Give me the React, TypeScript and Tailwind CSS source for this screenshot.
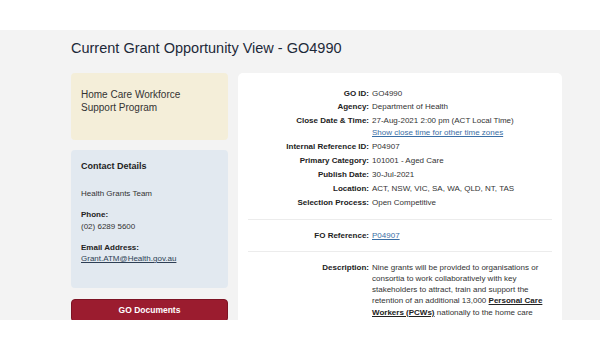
import React from "react";

type RowProps = { label: string; children: React.ReactNode };

function Row({ label, children }: RowProps) {
  return (
    <div className="flex gap-[3px]">
      <div className="w-[121px] shrink-0 text-right font-bold text-[#222]">{label}</div>
      <div className="flex-1 text-[#333]">{children}</div>
    </div>
  );
}

export default function App() {
  return (
    <div className="w-[600px] h-[350px] overflow-hidden bg-white font-['Liberation_Sans',Arial,sans-serif]">
      {/* top bar */}
      <div className="h-[30px] bg-white" />

      {/* page body */}
      <div className="h-[290px] overflow-hidden bg-[#f3f3f3] pl-[71px]">
        <h1 className="pt-[9px] text-[14.5px] leading-[18px] text-[#1d2939]">
          Current Grant Opportunity View - GO4990
        </h1>

        <div className="mt-[16px] flex gap-[10px]">
          {/* left column */}
          <div className="flex w-[157px] shrink-0 flex-col">
            <div className="h-[67px] rounded-[4px] bg-[#f4eed9] px-[10px] pt-[15px] text-[10px] leading-[13.3px] text-[#333]">
              Home Care Workforce
              <br />
              Support Program
            </div>

            <div className="mt-[10px] h-[138px] rounded-[4px] bg-[#e2e9f0] px-[10px] pt-[10px] text-[8px] leading-[11.5px] text-[#333]">
              <div className="text-[9px] leading-[12px] font-bold text-[#222]">Contact Details</div>
              <div className="mt-[15.5px]">Health Grants Team</div>
              <div className="mt-[10.3px] font-bold text-[#222]">Phone:</div>
              <div>(02) 6289 5600</div>
              <div className="mt-[9.3px] font-bold text-[#222]">Email Address:</div>
              <div className="text-[#2e3f55] underline">Grant.ATM@Health.gov.au</div>
            </div>

            <button className="mt-[11px] h-[23px] rounded-[4px] border border-[#7d1424] bg-[#9b1c2f] text-[8.5px] font-bold text-white">
              GO Documents
            </button>
          </div>

          {/* right card */}
          <div className="h-[260px] w-[324px] shrink-0 rounded-[5px] bg-white px-[10px] pt-[14.5px] text-[8px] leading-[11.6px]">
            <div className="flex flex-col gap-[2.4px] pb-[10px]">
              <Row label="GO ID:">GO4990</Row>
              <Row label="Agency:">Department of Health</Row>
              <Row label="Close Date & Time:">
                27-Aug-2021 2:00 pm (ACT Local Time)
                <br />
                <span className="text-[#3a6ea5] underline">Show close time for other time zones</span>
              </Row>
              <Row label="Internal Reference ID:">P04907</Row>
              <Row label="Primary Category:">101001 - Aged Care</Row>
              <Row label="Publish Date:">30-Jul-2021</Row>
              <Row label="Location:">ACT, NSW, VIC, SA, WA, QLD, NT, TAS</Row>
              <Row label="Selection Process:">Open Competitive</Row>
            </div>

            <div className="border-t border-[#ececec] py-[10px]">
              <Row label="FO Reference:">
                <span className="text-[#3a6ea5] underline">P04907</span>
              </Row>
            </div>

            <div className="border-t border-[#ececec] pt-[10px] leading-[11.1px]">
              <Row label="Description:">
                Nine grants will be provided to organisations or consortia to work collaboratively with key
                stakeholders to attract, train and support the retention of an additional 13,000{" "}
                <span className="font-bold text-[#222] underline">Personal Care Workers (PCWs)</span> nationally
                to the home care sector by June 2022.
              </Row>
            </div>
          </div>
        </div>
      </div>
    </div>
  );
}
